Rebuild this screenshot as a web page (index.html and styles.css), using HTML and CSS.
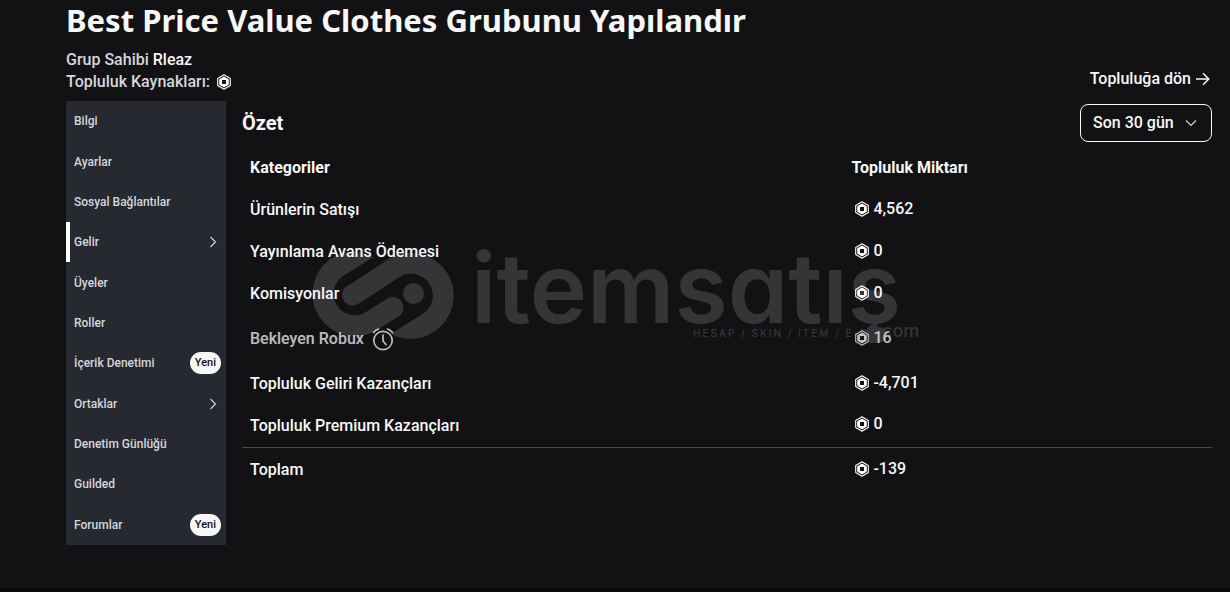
FILE: index.html
```html
<!DOCTYPE html>
<html lang="tr">
<head>
    <meta charset="UTF-8">
    <meta name="viewport" content="width=device-width, initial-scale=1.0">
    <title>Best Price Value Clothes Grubunu Yapılandır</title>
    <link rel="stylesheet" href="styles.css">
</head>
<body>
    <!-- shared icons -->
    <svg class="sprite" aria-hidden="true">
        <symbol id="robux" viewBox="0 0 16 16">
            <path d="M8 .8 14.300 4.400v7.200L8 15.200 1.700 11.600V4.400Z" fill="none" stroke="currentColor" stroke-width="1.100" stroke-linejoin="round"/>
            <path fill="currentColor" fill-rule="evenodd" d="M8 2.600 12.300 5q.5.3.5.9v4.200q0 .6-.5.9L8 13.400 3.700 11q-.5-.3-.5-.9V5.900q0-.6.5-.9ZM6 6v4h4V6Z"/>
        </symbol>
        <symbol id="chevron" viewBox="0 0 12 12">
            <path d="M3.500 1 8.500 6l-5 5" fill="none" stroke="currentColor" stroke-width="1.100"/>
        </symbol>
    </svg>

    <div class="watermark" aria-hidden="true">
        <svg width="612" height="92" viewBox="0 0 612 92">
            <clipPath id="mark-left"><circle cx="44" cy="45" r="43"/><rect x="44" y="34" width="60" height="58"/></clipPath>
            <clipPath id="mark-right"><circle cx="102" cy="46" r="43"/><rect x="30" y="0" width="72" height="57"/></clipPath>
            <g fill="none" stroke="#353537" stroke-width="21">
                <path clip-path="url(#mark-left)" d="M75-12 27 18A32 32 0 0 0 61 72L84 57.500"/>
                <path clip-path="url(#mark-right)" d="M44 45 85 18A32 32 0 0 1 119 73L71 103"/>
            </g>
            <g fill="#353537">
                <circle cx="43.500" cy="45" r="10.500"/>
                <circle cx="84" cy="57.500" r="10.500"/>
                <circle cx="104.500" cy="43.500" r="10.500"/>
            </g>
            <text class="wm-name" x="162" y="73">itemsatış</text>
            <text class="wm-tag" x="384" y="87">HESAP / SKIN / ITEM / E-PIN</text>
            <circle cx="564" cy="82" r="7" fill="#353537"/>
            <text class="wm-com" x="573" y="87">com</text>
        </svg>
    </div>

    <div class="page">
        <h1>Best Price Value Clothes Grubunu Yapılandır</h1>
        <header>
            <div class="owner">
                <p>Grup Sahibi <a href="#">Rleaz</a></p>
                <p>Topluluk Kaynakları: <svg class="robux"><use href="#robux"/></svg></p>
            </div>
            <a class="back" href="#">Topluluğa dön
                <svg width="14" height="14" viewBox="0 0 14 14"><path d="M0 7h12.500M7 1.200 12.800 7 7 12.800" fill="none" stroke="currentColor" stroke-width="1.500"/></svg>
            </a>
        </header>

        <div class="container">
            <nav>
                <a href="#">Bilgi</a>
                <a href="#">Ayarlar</a>
                <a href="#">Sosyal Bağlantılar</a>
                <a href="#" class="active">Gelir <svg class="chevron"><use href="#chevron"/></svg></a>
                <a href="#">Üyeler</a>
                <a href="#">Roller</a>
                <a href="#">İçerik Denetimi <span class="new">Yeni</span></a>
                <a href="#">Ortaklar <svg class="chevron"><use href="#chevron"/></svg></a>
                <a href="#">Denetim Günlüğü</a>
                <a href="#">Guilded</a>
                <a href="#">Forumlar <span class="new">Yeni</span></a>
            </nav>

            <main>
                <div class="summary-head">
                    <h2>Özet</h2>
                    <div class="period">
                        <select aria-label="Dönem">
                            <option>Son 30 gün</option>
                        </select>
                        <svg class="chevron"><use href="#chevron"/></svg>
                    </div>
                </div>
                <table>
                    <thead>
                        <tr><th>Kategoriler</th><th>Topluluk Miktarı</th></tr>
                    </thead>
                    <tbody>
                        <tr><td>Ürünlerin Satışı</td><td><span class="amount"><svg class="robux"><use href="#robux"/></svg>4,562</span></td></tr>
                        <tr><td>Yayınlama Avans Ödemesi</td><td><span class="amount"><svg class="robux"><use href="#robux"/></svg>0</span></td></tr>
                        <tr><td>Komisyonlar</td><td><span class="amount"><svg class="robux"><use href="#robux"/></svg>0</span></td></tr>
                        <tr class="pending">
                            <td>
                                <span class="label">Bekleyen Robux
                                    <svg width="22" height="24" viewBox="0 0 22 24" fill="none" stroke="currentColor" stroke-width="1.700" stroke-linecap="round"><circle cx="11" cy="13.500" r="9.200"/><path d="M11 8v6l3 3.500M1.500 5.500Q3.500 3 6.500 2M20.500 5.500Q18.500 3 15.500 2"/></svg>
                                </span>
                            </td>
                            <td><span class="amount"><svg class="robux"><use href="#robux"/></svg>16</span></td>
                        </tr>
                        <tr><td>Topluluk Geliri Kazançları</td><td><span class="amount"><svg class="robux"><use href="#robux"/></svg>-4,701</span></td></tr>
                        <tr><td>Topluluk Premium Kazançları</td><td><span class="amount"><svg class="robux"><use href="#robux"/></svg>0</span></td></tr>
                    </tbody>
                    <tfoot>
                        <tr><td>Toplam</td><td><span class="amount"><svg class="robux"><use href="#robux"/></svg>-139</span></td></tr>
                    </tfoot>
                </table>
            </main>
        </div>
    </div>
</body>
</html>
```
FILE: styles.css
```css
* {
    box-sizing: border-box;
}
body {
    font-family: Roboto, "Liberation Sans", sans-serif;
    font-size: 16px;
    font-weight: 500;
    line-height: 22px;
    margin: 0;
    min-height: 100vh;
    background-color: #121214;
    color: #f7f7f8;
    border-bottom: 4px solid #0b090e;
    position: relative;
    z-index: 0;
}
h1, h2, p {
    margin: 0;
}
a {
    color: inherit;
    text-decoration: none;
}
.sprite {
    position: absolute;
    width: 0;
    height: 0;
}
.page {
    padding: 0 18px 0 66px;
}
h1 {
    font-family: "Noto Sans", sans-serif;
    font-size: 31px;
    font-weight: 700;
    line-height: 40px;
    padding-bottom: 9px;
}
header {
    display: flex;
    justify-content: space-between;
    align-items: flex-end;
    padding-bottom: 8px;
}
.owner {
    color: #d5d7dd;
}
.owner a {
    color: #f7f7f8;
}
.owner .robux {
    margin-left: 2px;
}
.back {
    display: flex;
    align-items: center;
    gap: 5px;
    padding: 0 2px 3px 0;
}
.robux {
    width: 16px;
    height: 16px;
    vertical-align: -3px;
    color: #fff;
}
.chevron {
    width: 12px;
    height: 12px;
}
.container {
    display: flex;
    gap: 16px;
    align-items: flex-start;
}

/* sidebar */
nav {
    width: 160px;
    min-height: 444px;
    display: grid;
    grid-auto-rows: 1fr;
    background-color: #272930;
    color: #d5d7dd;
    font-size: 12px;
}
nav a {
    display: flex;
    align-items: center;
    justify-content: space-between;
    border-left: 4px solid transparent;
    padding: 0 5px 0 4px;
}
nav a.active {
    border-color: #fff;
}
nav .chevron {
    margin-right: 2px;
}
.new {
    background-color: #f7f7f8;
    color: #121214;
    font-size: 11px;
    border-radius: 12px;
    padding: 0 5px;
}

/* summary table */
main {
    flex: 1;
}
.summary-head {
    display: flex;
    justify-content: space-between;
    align-items: center;
    padding: 3px 0 5px;
}
h2 {
    font-size: 20px;
    font-weight: 700;
}
.period {
    position: relative;
}
.period select {
    appearance: none;
    width: 132px;
    height: 38px;
    padding: 0 12px;
    font: inherit;
    color: inherit;
    background: transparent;
    border: 1px solid #f7f7f8;
    border-radius: 8px;
}
.period .chevron {
    position: absolute;
    right: 15px;
    top: 13px;
    transform: rotate(90deg);
    pointer-events: none;
    color: #d5d7dd;
}
table {
    width: 100%;
    border-collapse: collapse;
    table-layout: fixed;
}
th, td {
    height: 42px;
    padding: 0 8px;
    text-align: left;
}
th {
    font-weight: 700;
}
th:first-child {
    width: 62%;
}
.pending td {
    height: 48px;
}
.label, .amount {
    display: flex;
    align-items: center;
}
.label {
    gap: 8px;
}
.amount {
    gap: 3px;
    padding: 0 0 3px 3px;
}
.pending .label, .pending .amount {
    opacity: 0.75;
}
tfoot tr {
    border-top: 1px solid #44465a;
}
tfoot td {
    height: 46px;
}

/* site mark behind the content */
.watermark {
    position: absolute;
    inset: 0 0 -4px;
    display: flex;
    align-items: center;
    justify-content: center;
    z-index: -1;
}
.watermark svg {
    overflow: visible;
}
.watermark text {
    font-family: Inter, sans-serif;
    font-feature-settings: "cv11";
    fill: #353537;
}
.wm-name {
    font-size: 97px;
    font-weight: 600;
}
.wm-tag {
    font-size: 10px;
    letter-spacing: 2px;
}
.wm-com {
    font-size: 18px;
}
```
